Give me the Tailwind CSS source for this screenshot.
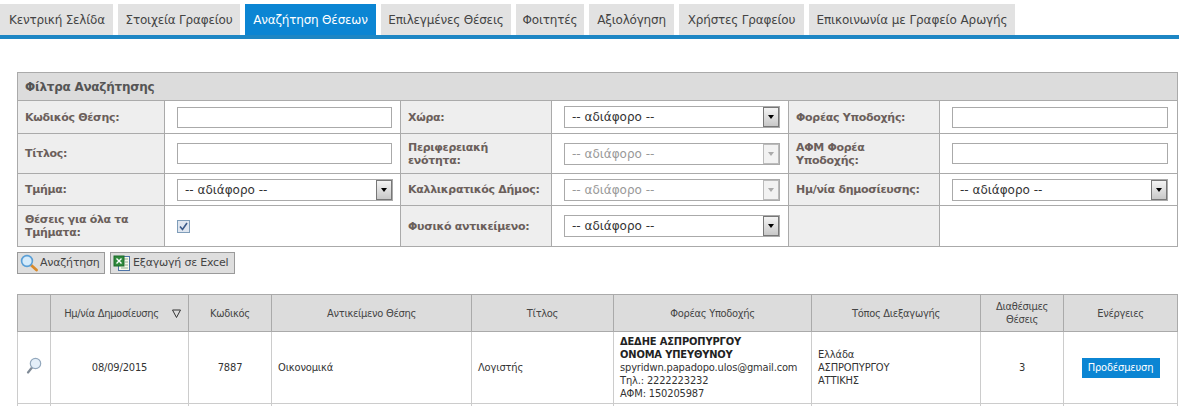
<!DOCTYPE html>
<html lang="el">

<head>
  <meta charset="UTF-8">
  <title>Αναζήτηση Θέσεων</title>
  <script src="https://cdn.jsdelivr.net/npm/@tailwindcss/browser@4"></script>
</head>

<body class="h-[406px] overflow-hidden bg-white font-['DejaVu_Sans',sans-serif] text-[#333]">

  <!-- tabs -->
  <nav class="flex h-[39px] items-end gap-[5px] border-b-4 border-[#1d86c4] pt-[4px] text-[12px] tracking-[-0.2px] text-[#444]">
    <a class="flex h-full w-[113px] items-center justify-center bg-[#e2e2e2] pl-[1px]">Κεντρική Σελίδα</a>
    <a class="flex h-full w-[122px] items-center justify-center bg-[#e2e2e2]">Στοιχεία Γραφείου</a>
    <a class="flex h-full w-[131px] items-center justify-center bg-[#0b85d3] text-white">Αναζήτηση Θέσεων</a>
    <a class="flex h-full w-[130px] items-center justify-center bg-[#e2e2e2]">Επιλεγμένες Θέσεις</a>
    <a class="flex h-full w-[68px] items-center justify-center bg-[#e2e2e2]">Φοιτητές</a>
    <a class="flex h-full w-[85px] items-center justify-center bg-[#e2e2e2]">Αξιολόγηση</a>
    <a class="flex h-full w-[125px] items-center justify-center bg-[#e2e2e2]">Χρήστες Γραφείου</a>
    <a class="flex h-full w-[206px] items-center justify-center bg-[#e2e2e2] tracking-[-0.1px]">Επικοινωνία με Γραφείο Αρωγής</a>
  </nav>

  <main class="px-[17px] pt-[33px]">

    <!-- filters -->
    <table class="w-[1160px] table-fixed border-collapse border border-[#aaa] text-[11px]">
      <colgroup>
        <col class="w-[147px]"><col class="w-[236px]"><col class="w-[151px]"><col class="w-[237px]"><col class="w-[151px]"><col class="w-[238px]">
      </colgroup>
      <thead>
        <tr class="h-[28px] bg-[#dcdcdc]">
          <th colspan="6" class="border border-[#aaa] px-[7px] text-left text-[12px] font-bold tracking-[-0.25px] text-[#555]">Φίλτρα Αναζήτησης</th>
        </tr>
      </thead>
      <tbody>
        <tr class="h-[33px]">
          <th class="border border-[#aaa] bg-[#eee] pl-[7px] text-left font-bold leading-[13px] tracking-[-0.3px] text-[#6b5f5b]">Κωδικός Θέσης:</th>
          <td class="border border-[#aaa] px-[12px]"><input type="text" class="block h-[21px] w-[215px] border border-[#aaa] bg-white"></td>
          <th class="border border-[#aaa] bg-[#eee] pl-[7px] text-left font-bold leading-[13px] tracking-[-0.3px] text-[#6b5f5b]">Χώρα:</th>
          <td class="border border-[#aaa] px-[12px]">
            <div class="relative h-[22px] w-[216px]">
              <select class="block h-full w-full appearance-none border border-[#aaa] bg-white pl-[7px] text-[12px] text-[#333]"><option>-- αδιάφορο --</option></select>
              <span class="absolute top-[1px] right-[1px] flex h-[20px] w-[16px] items-center justify-center border border-[#777] bg-gradient-to-b from-[#f4f4f4] to-[#c8c8c8]"><span class="h-0 w-0 border-x-[3.5px] border-t-[4px] border-x-transparent border-t-black"></span></span>
            </div>
          </td>
          <th class="border border-[#aaa] bg-[#eee] pl-[7px] text-left font-bold leading-[13px] tracking-[-0.3px] text-[#6b5f5b]">Φορέας Υποδοχής:</th>
          <td class="border border-[#aaa] px-[12px]"><input type="text" class="block h-[21px] w-[216px] border border-[#aaa] bg-white"></td>
        </tr>
        <tr class="h-[40px]">
          <th class="border border-[#aaa] bg-[#eee] pl-[7px] text-left font-bold leading-[13px] tracking-[-0.3px] text-[#6b5f5b]">Τίτλος:</th>
          <td class="border border-[#aaa] px-[12px]"><input type="text" class="block h-[21px] w-[215px] border border-[#aaa] bg-white"></td>
          <th class="border border-[#aaa] bg-[#eee] pl-[7px] text-left font-bold leading-[13px] tracking-[-0.3px] text-[#6b5f5b]">Περιφερειακή<br>ενότητα:</th>
          <td class="border border-[#aaa] px-[12px]">
            <div class="relative h-[22px] w-[216px]">
              <select disabled class="block h-full w-full appearance-none border border-[#aaa] bg-white pl-[7px] text-[12px] text-[#999]"><option>-- αδιάφορο --</option></select>
              <span class="absolute top-[1px] right-[1px] flex h-[20px] w-[16px] items-center justify-center border border-[#bbb] bg-[#f2f2f2]"><span class="h-0 w-0 border-x-[3.5px] border-t-[4px] border-x-transparent border-t-[#aaa]"></span></span>
            </div>
          </td>
          <th class="border border-[#aaa] bg-[#eee] pl-[7px] text-left font-bold leading-[13px] tracking-[-0.3px] text-[#6b5f5b]">ΑΦΜ Φορέα<br>Υποδοχής:</th>
          <td class="border border-[#aaa] px-[12px]"><input type="text" class="block h-[21px] w-[216px] border border-[#aaa] bg-white"></td>
        </tr>
        <tr class="h-[32px]">
          <th class="border border-[#aaa] bg-[#eee] pl-[7px] text-left font-bold leading-[13px] tracking-[-0.3px] text-[#6b5f5b]">Τμήμα:</th>
          <td class="border border-[#aaa] px-[12px]">
            <div class="relative h-[22px] w-[216px]">
              <select class="block h-full w-full appearance-none border border-[#aaa] bg-white pl-[7px] text-[12px] text-[#333]"><option>-- αδιάφορο --</option></select>
              <span class="absolute top-[1px] right-[1px] flex h-[20px] w-[16px] items-center justify-center border border-[#777] bg-gradient-to-b from-[#f4f4f4] to-[#c8c8c8]"><span class="h-0 w-0 border-x-[3.5px] border-t-[4px] border-x-transparent border-t-black"></span></span>
            </div>
          </td>
          <th class="border border-[#aaa] bg-[#eee] pl-[7px] text-left font-bold leading-[13px] tracking-[-0.3px] whitespace-nowrap text-[#6b5f5b]">Καλλικρατικός Δήμος:</th>
          <td class="border border-[#aaa] px-[12px]">
            <div class="relative h-[22px] w-[216px]">
              <select disabled class="block h-full w-full appearance-none border border-[#aaa] bg-white pl-[7px] text-[12px] text-[#999]"><option>-- αδιάφορο --</option></select>
              <span class="absolute top-[1px] right-[1px] flex h-[20px] w-[16px] items-center justify-center border border-[#bbb] bg-[#f2f2f2]"><span class="h-0 w-0 border-x-[3.5px] border-t-[4px] border-x-transparent border-t-[#aaa]"></span></span>
            </div>
          </td>
          <th class="border border-[#aaa] bg-[#eee] pl-[7px] text-left font-bold leading-[13px] tracking-[-0.3px] whitespace-nowrap text-[#6b5f5b]">Ημ/νία δημοσίευσης:</th>
          <td class="border border-[#aaa] px-[12px]">
            <div class="relative h-[22px] w-[216px]">
              <select class="block h-full w-full appearance-none border border-[#aaa] bg-white pl-[7px] text-[12px] text-[#333]"><option>-- αδιάφορο --</option></select>
              <span class="absolute top-[1px] right-[1px] flex h-[20px] w-[16px] items-center justify-center border border-[#777] bg-gradient-to-b from-[#f4f4f4] to-[#c8c8c8]"><span class="h-0 w-0 border-x-[3.5px] border-t-[4px] border-x-transparent border-t-black"></span></span>
            </div>
          </td>
        </tr>
        <tr class="h-[41px]">
          <th class="border border-[#aaa] bg-[#eee] pl-[7px] text-left font-bold leading-[13px] tracking-[-0.3px] text-[#6b5f5b]">Θέσεις για όλα τα<br>Τμήματα:</th>
          <td class="border border-[#aaa] px-[12px]">
            <span class="flex h-[13px] w-[13px] items-center justify-center border border-[#7f9db9] bg-[#dfe6f0]">
              <svg width="9" height="9" viewBox="0 0 9 9" fill="none" stroke="#3b5a8a" stroke-width="1.6"><path d="M1 4.5 L3.5 7.5 L8 1"/></svg>
            </span>
          </td>
          <th class="border border-[#aaa] bg-[#eee] pl-[7px] text-left font-bold leading-[13px] tracking-[-0.3px] text-[#6b5f5b]">Φυσικό αντικείμενο:</th>
          <td class="border border-[#aaa] px-[12px]">
            <div class="relative h-[22px] w-[216px]">
              <select class="block h-full w-full appearance-none border border-[#aaa] bg-white pl-[7px] text-[12px] text-[#333]"><option>-- αδιάφορο --</option></select>
              <span class="absolute top-[1px] right-[1px] flex h-[20px] w-[16px] items-center justify-center border border-[#777] bg-gradient-to-b from-[#f4f4f4] to-[#c8c8c8]"><span class="h-0 w-0 border-x-[3.5px] border-t-[4px] border-x-transparent border-t-black"></span></span>
            </div>
          </td>
          <th class="border border-[#aaa] bg-[#eee]"></th>
          <td class="border border-[#aaa]"></td>
        </tr>
      </tbody>
    </table>

    <!-- buttons -->
    <div class="mt-[5px] flex gap-[5px] text-[11px] tracking-[-0.2px] whitespace-nowrap text-[#444]">
      <button class="flex h-[22px] w-[88px] items-center gap-[2px] border border-[#9a9a9a] bg-[#dedede] pl-[2px]">
        <svg width="18" height="18" viewBox="0 0 18 18" fill="none">
          <path d="M11 11 L16.5 16" stroke="#d98a2b" stroke-width="2.8" stroke-linecap="round"/>
          <circle cx="7" cy="7" r="5.4" fill="#d5ebfb" stroke="#5a9fd6" stroke-width="1.6"/>
        </svg>
        <span>Αναζήτηση</span>
      </button>
      <button class="flex h-[22px] w-[125px] items-center gap-[2px] border border-[#9a9a9a] bg-[#dedede] pl-[2px]">
        <svg width="18" height="18" viewBox="0 0 18 18" fill="none">
          <rect x="5.5" y="2.5" width="11" height="14" fill="#f8f8ec" stroke="#4d74a8"/>
          <path d="M10 5 H15 M12 8 H15 M12 11 H15 M8 14 H15" stroke="#8fb08f"/>
          <rect x="1" y="2" width="10" height="10" fill="#2f8a3c" stroke="#1c6a2a"/>
          <path d="M3.5 4.5 L8.5 9.5 M8.5 4.5 L3.5 9.5" stroke="#fff" stroke-width="1.4"/>
        </svg>
        <span>Εξαγωγή σε Excel</span>
      </button>
    </div>

    <!-- results -->
    <table class="mt-[20px] w-[1160px] table-fixed border-collapse border border-[#aaa] font-['DejaVu_Sans_Condensed','DejaVu_Sans',sans-serif] text-[11px] tracking-[-0.15px]">
      <colgroup>
        <col class="w-[33px]"><col class="w-[138px]"><col class="w-[83px]"><col class="w-[200px]"><col class="w-[142px]"><col class="w-[198px]"><col class="w-[169px]"><col class="w-[83px]"><col class="w-[114px]">
      </colgroup>
      <thead>
        <tr class="h-[37px] bg-[#dcdcdc] leading-[13px] tracking-[-0.3px] text-[#444]">
          <th class="border border-[#aaa] font-normal"></th>
          <th class="border border-[#aaa] font-normal">
            <span class="flex items-center justify-center gap-[13px] pl-[6px]">Ημ/νία Δημοσίευσης
              <svg width="9" height="9" viewBox="0 0 9 9" fill="none" stroke="#333"><path d="M0.5 1 H8.5 L4.5 8.5 Z"/></svg>
            </span>
          </th>
          <th class="border border-[#aaa] font-normal">Κωδικός</th>
          <th class="border border-[#aaa] font-normal">Αντικείμενο Θέσης</th>
          <th class="border border-[#aaa] font-normal">Τίτλος</th>
          <th class="border border-[#aaa] font-normal">Φορέας Υποδοχής</th>
          <th class="border border-[#aaa] font-normal">Τόπος Διεξαγωγής</th>
          <th class="border border-[#aaa] font-normal">Διαθέσιμες<br>Θέσεις</th>
          <th class="border border-[#aaa] font-normal">Ενέργειες</th>
        </tr>
      </thead>
      <tbody>
        <tr class="h-[72px] leading-[13px] text-[#333]">
          <td class="border border-[#ccc] align-middle">
            <svg class="mx-auto -mt-[3px]" width="16" height="18" viewBox="0 0 16 18" fill="none">
              <path d="M6 10.5 L2 15.5" stroke="#7f8a96" stroke-width="2.2" stroke-linecap="round"/>
              <circle cx="9.5" cy="6.5" r="5.2" fill="#e4eff9" stroke="#93a8bd" stroke-width="1.2"/>
            </svg>
          </td>
          <td class="border border-[#ccc] text-center">08/09/2015</td>
          <td class="border border-[#ccc] text-center">7887</td>
          <td class="border border-[#ccc] px-[6px]">Οικονομικά</td>
          <td class="border border-[#ccc] px-[6px]">Λογιστής</td>
          <td class="border border-[#ccc] px-[6px]">
            <b class="block text-[#222]">ΔΕΔΗΕ ΑΣΠΡΟΠΥΡΓΟΥ<br>ΟΝΟΜΑ ΥΠΕΥΘΥΝΟΥ</b>
            spyridwn.papadopo.ulos@gmail.com<br>Τηλ.: 2222223232<br>ΑΦΜ: 150205987
          </td>
          <td class="border border-[#ccc] px-[6px]">Ελλάδα<br>ΑΣΠΡΟΠΥΡΓΟΥ<br>ΑΤΤΙΚΗΣ</td>
          <td class="border border-[#ccc] text-center">3</td>
          <td class="border border-[#ccc] text-center">
            <a class="inline-flex h-[20px] w-[78px] items-center justify-center bg-[#0b85d3] text-white">Προδέσμευση</a>
          </td>
        </tr>
        <tr class="h-[20px]">
          <td class="border border-[#ccc]"></td><td class="border border-[#ccc]"></td><td class="border border-[#ccc]"></td><td class="border border-[#ccc]"></td><td class="border border-[#ccc]"></td><td class="border border-[#ccc]"></td><td class="border border-[#ccc]"></td><td class="border border-[#ccc]"></td><td class="border border-[#ccc]"></td>
        </tr>
      </tbody>
    </table>
  </main>
</body>
</html>
